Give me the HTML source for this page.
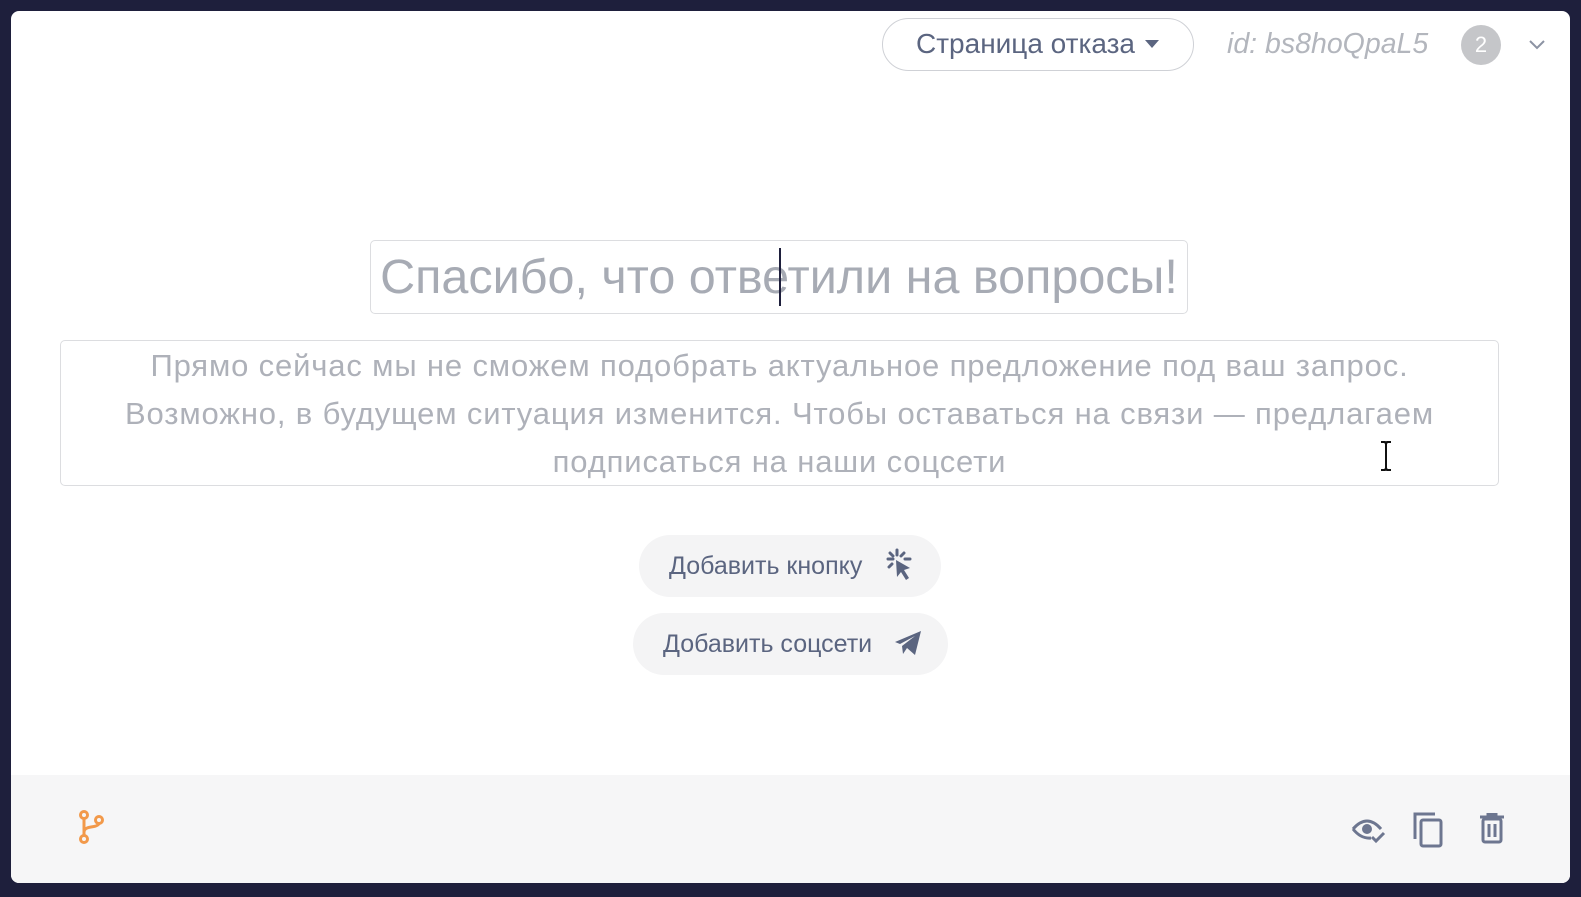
<!DOCTYPE html>
<html><head><meta charset="utf-8"><style>
*{box-sizing:border-box;margin:0;padding:0}
body{width:1581px;height:897px;background:#1e1f3c;font-family:"Liberation Sans",sans-serif;position:relative;overflow:hidden}
.card{position:absolute;left:11px;top:11px;width:1559px;height:872px;background:#fff;border-radius:8px;overflow:hidden}
.foot{position:absolute;left:0;top:764px;width:100%;height:110px;background:#f6f6f7}
.sel{position:absolute;left:871px;top:7px;width:312px;height:53px;border:1.5px solid #cfd1d6;border-radius:27px;color:#5b6580;font-size:28px;line-height:50px;padding-left:33px;white-space:nowrap}
.sel:after{content:"";position:absolute;left:262px;top:21px;border:7px solid transparent;border-top:8px solid #5b6580}
.id{position:absolute;left:1216px;top:17px;font-size:28.5px;font-style:italic;color:#b3b6bd;white-space:nowrap}
.badge{position:absolute;left:1450px;top:14px;width:40px;height:40px;border-radius:50%;background:#c5c6c9;color:#fff;font-size:22px;text-align:center;line-height:40px}
.title{position:absolute;left:359px;top:229px;width:818px;height:74px;border:1.5px solid #dcdde0;border-radius:5px;font-size:48.5px;color:#a7abb4;text-align:center;line-height:72px;white-space:nowrap}
.caret{position:absolute;left:768px;top:237px;width:2px;height:58px;background:#1e1f3c}
.para{position:absolute;left:49px;top:329px;width:1439px;height:146px;border:1.5px solid #dcdde0;border-radius:5px;font-size:31px;letter-spacing:0.85px;color:#aeb1b9;text-align:center;line-height:48px;padding-top:1px;white-space:nowrap}
.btn{position:absolute;height:62px;border-radius:31px;background:#f4f4f5;color:#5b6580;font-size:25px;line-height:62px;padding-left:30px;white-space:nowrap}
</style></head><body>
<div class="card">
<div class="sel">Страница отказа</div>
<div class="id">id: bs8hoQpaL5</div>
<div class="badge">2</div>
<svg style="position:absolute;left:1516px;top:27px" width="20" height="14" viewBox="0 0 20 14"><path d="M3 3l7 7 7-7" stroke="#8c93a3" stroke-width="2" fill="none"/></svg>
<div class="title">Спасибо, что ответили на вопросы!</div>
<div class="caret"></div>
<div class="para">Прямо сейчас мы не сможем подобрать актуальное предложение под ваш запрос.<br>Возможно, в будущем ситуация изменится. Чтобы оставаться на связи — предлагаем<br>подписаться на наши соцсети</div>
<svg style="position:absolute;left:1367px;top:429px" width="16" height="32" viewBox="0 0 16 32"><path d="M3 2h4l1 2 1-2h4M8 4v24M3 30h4l1-2 1 2h4" stroke="#111" stroke-width="2" fill="none"/></svg>
<div class="btn" style="left:628px;top:524px;width:302px">Добавить кнопку
<svg style="position:absolute;left:244px;top:12px" width="32" height="36" viewBox="0 0 32 36"><g stroke="#5b6580" stroke-width="3" stroke-linecap="round"><path d="M14 3v5M5 12h5M7 6l3 3M21 6l-3 3M6 20l3-3M22 12h5"/></g><path d="M13 13l14 8-6 2 5 8-3 2-5-8-4 5z" fill="#5b6580"/></svg></div>
<div class="btn" style="left:622px;top:602px;width:315px">Добавить соцсети
<svg style="position:absolute;left:260px;top:16px" width="30" height="28" viewBox="0 0 30 28"><path d="M2 13L28 2 22 26 14 19 10 25 9 17 22 7 7 15z" fill="#5b6580"/></svg></div>
<div class="foot">
<svg style="position:absolute;left:66px;top:34px" width="30" height="36" viewBox="0 0 30 36"><g stroke="#f2994a" stroke-width="3" fill="none"><circle cx="7" cy="6" r="3.5"/><circle cx="7" cy="30" r="3.5"/><circle cx="22" cy="11" r="3.5"/><path d="M7 10v16M7 23q0-4 7-5 8-1 8-4"/></g></svg>
<svg style="position:absolute;left:1340px;top:40px" width="36" height="32" viewBox="0 0 36 32"><path d="M2 14Q16-2 30 14" stroke="#6d7690" stroke-width="3" fill="none"/><path d="M2 14Q10 24 20 23" stroke="#6d7690" stroke-width="3" fill="none"/><circle cx="16" cy="14" r="5" fill="#6d7690"/><path d="M21 22l4 4 8-8" stroke="#6d7690" stroke-width="3" fill="none"/></svg>
<svg style="position:absolute;left:1401px;top:36px" width="34" height="38" viewBox="0 0 34 38"><path d="M3 28V3h20" stroke="#6d7690" stroke-width="3" fill="none"/><rect x="9" y="9" width="20" height="26" rx="2" stroke="#6d7690" stroke-width="3" fill="none"/></svg>
<svg style="position:absolute;left:1467px;top:38px" width="28" height="32" viewBox="0 0 28 32"><path d="M2 4h24M10 4V1h8v3" stroke="#6d7690" stroke-width="3" fill="none"/><rect x="5" y="6" width="18" height="23" rx="2" stroke="#6d7690" stroke-width="3" fill="none"/><path d="M11 11v13M17 11v13" stroke="#6d7690" stroke-width="3"/></svg>
</div>
</div>
</body></html>
